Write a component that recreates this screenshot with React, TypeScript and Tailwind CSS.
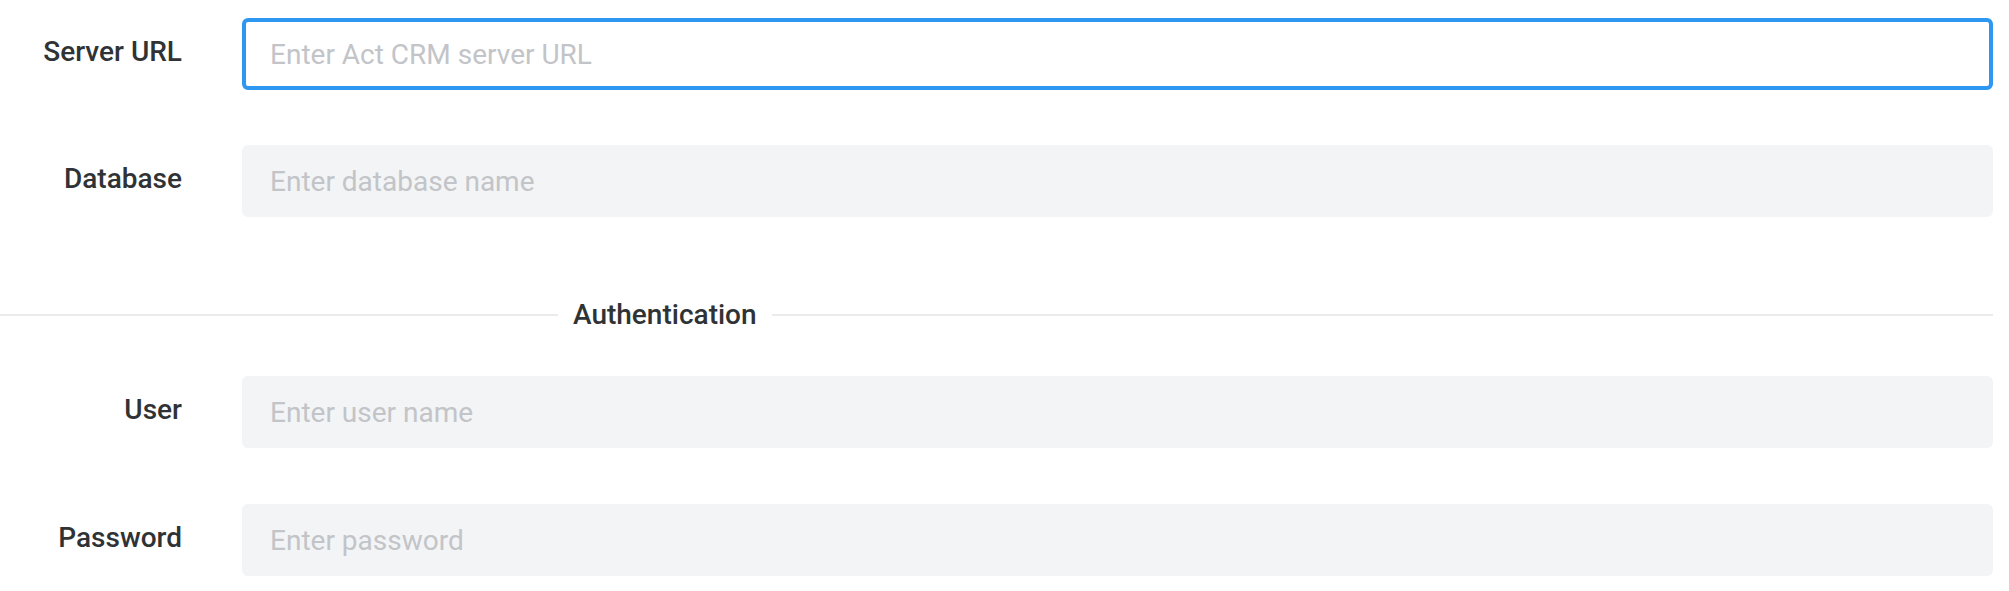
const labelCls =
  "w-[182px] shrink-0 text-right text-[28px] font-medium text-[#303336] pb-[4px]";
const inputBase =
  "h-[72px] flex-1 min-w-0 rounded-[6px] border-4 pl-[24px] pr-4 text-[28px] text-[#303336] outline-none placeholder:text-[#c2c4c8]";

function Field({
  label,
  placeholder,
  active,
  type = "text",
  className = "",
}: {
  label: string;
  placeholder: string;
  active?: boolean;
  type?: string;
  className?: string;
}) {
  return (
    <div className={`flex items-center gap-[60px] ${className}`}>
      <label className={labelCls}>{label}</label>
      <input
        type={type}
        placeholder={placeholder}
        className={
          inputBase +
          (active
            ? " border-[#2d97f2] bg-white"
            : " border-transparent bg-[#f3f4f6]")
        }
      />
    </div>
  );
}

export default function App() {
  return (
    <div
      className="min-h-screen bg-white pr-4 pt-[18px]"
      style={{ fontFamily: "Roboto, 'Liberation Sans', sans-serif" }}
    >
      <Field label="Server URL" placeholder="Enter Act CRM server URL" active />
      <Field label="Database" placeholder="Enter database name" className="mt-[55px]" />

      <div className="mt-[78px] flex h-[40px] items-center">
        <div className="h-[2px] w-[558px] bg-[#ebebeb]" />
        <span className="px-[15px] text-[28px] font-medium leading-[40px] text-[#303336]">
          Authentication
        </span>
        <div className="h-[2px] flex-1 bg-[#ebebeb]" />
      </div>

      <Field label="User" placeholder="Enter user name" className="mt-[41px]" />
      <Field
        label="Password"
        placeholder="Enter password"
        type="password"
        className="mt-[56px]"
      />
    </div>
  );
}
